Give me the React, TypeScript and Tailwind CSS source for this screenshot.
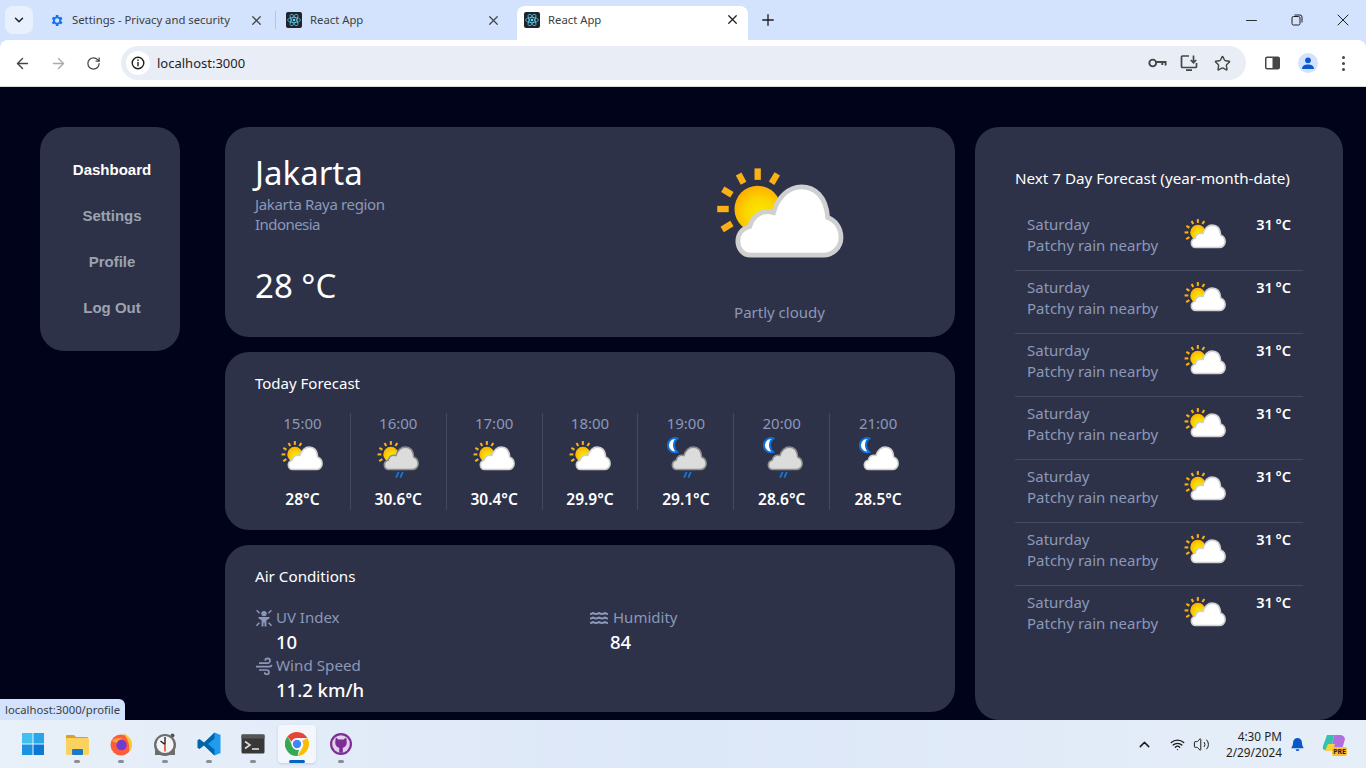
import { ArrowLeft, ArrowRight, ChevronDown, ChevronUp, Minus, Plus, RotateCw, Star, Volume2, Wifi, X } from "lucide-react";
import { FaWater } from "react-icons/fa";

// weather glyph, 64 units wide; main card draws it at 128px, lists at 42px
function WeatherIcon({ kind = "sun", rain = false, className = "" }: { kind?: "sun" | "moon"; rain?: boolean; className?: string }) {
  const rays = [
    [21, 1.7, 21, 7.5],
    [11.4, 4.5, 13.9, 9.2],
    [30.9, 4.5, 28, 9.2],
    [3.4, 12.2, 8, 15],
    [0.6, 22.2, 6.4, 22.2],
    [3.1, 32.5, 8, 29.5],
  ];
  return (
    <svg viewBox="0 0 64 60" className={`overflow-visible shrink-0 ${className}`}>
      <defs>
        <radialGradient id="sunfill" cx="0.55" cy="0.6" r="0.6">
          <stop offset="0" stopColor="#f6ea00" />
          <stop offset="0.55" stopColor="#fbd400" />
          <stop offset="1" stopColor="#ffae00" />
        </radialGradient>
      </defs>
      {kind === "sun" ? (
        <g>
          {rays.map((r, i) => (
            <line key={i} x1={r[0]} y1={r[1]} x2={r[2]} y2={r[3]} stroke="#fbb014" strokeWidth="3.2" />
          ))}
          <circle cx="21" cy="22.2" r="11.7" fill="url(#sunfill)" />
        </g>
      ) : (
        <path d="M18.5 -2.5A11 11 0 1 0 18.5 18.5 13.5 13.5 0 0 1 18.5 -2.5Z" fill="#fff" stroke="#1272dc" strokeWidth="3" />
      )}
      <path
        d="M17.5 45.5C13.5 45.5 11 42 11 38.5 11 34.5 13.5 31.8 17 31 18 27 21.5 23.5 26 23.5 27 23.5 28 23.7 29 24 31 16 37 11 43 11 50 11 55.5 16 56.3 26.5 60.5 28 63 32 63 36.5 63 41.5 59 45.5 54 45.5Z"
        fill={rain ? "#dcdcdc" : "#fff"}
        stroke={rain ? "#8f8f8f" : "#d0d0d0"}
        strokeWidth="2.4"
      />
      {rain && (
        <g stroke="#1b7ad8" strokeWidth="2.6">
          <line x1="29" y1="58" x2="33" y2="49" />
          <line x1="35.5" y1="58" x2="39.5" y2="49" />
        </g>
      )}
    </svg>
  );
}

function ReactFavicon() {
  return (
    <svg viewBox="0 0 16 16" className="w-4 h-4 shrink-0">
      <rect width="16" height="16" rx="2" fill="#20232a" />
      <g fill="none" stroke="#61dafb" strokeWidth="0.7">
        <ellipse cx="8" cy="8" rx="6.4" ry="2.6" />
        <ellipse cx="8" cy="8" rx="6.4" ry="2.6" transform="rotate(60 8 8)" />
        <ellipse cx="8" cy="8" rx="6.4" ry="2.6" transform="rotate(120 8 8)" />
      </g>
      <circle cx="8" cy="8" r="1.3" fill="#61dafb" />
    </svg>
  );
}

function GearFavicon() {
  return (
    <svg viewBox="0 0 24 24" className="w-[15px] h-[15px] shrink-0" fill="#1a73e8">
      <path d="M19.4 13a7.5 7.5 0 0 0 0-2l2.1-1.6-2-3.5-2.5 1a7.5 7.5 0 0 0-1.7-1L15 3.2h-4l-.4 2.7a7.5 7.5 0 0 0-1.7 1l-2.5-1-2 3.5L6.6 11a7.5 7.5 0 0 0 0 2l-2.2 1.6 2 3.5 2.5-1a7.5 7.5 0 0 0 1.7 1l.4 2.7h4l.4-2.7a7.5 7.5 0 0 0 1.7-1l2.5 1 2-3.5ZM13 15.5a3.5 3.5 0 1 1 0-7 3.5 3.5 0 0 1 0 7Z" />
    </svg>
  );
}

function TabBar() {
  return (
    <div className="h-10 flex items-start pl-[5px] text-[11.3px] text-[#3c4043] shrink-0">
      <div className="mt-[6px] w-[28px] h-7 rounded-lg bg-[#e8f0fe] flex items-center justify-center">
        <ChevronDown size={14} strokeWidth={2.5} className="text-[#1f1f1f]" />
      </div>
      <div className="mt-[6px] ml-[16px] w-[226px] h-7 flex items-center">
        <GearFavicon />
        <span className="ml-2 flex-1 truncate">Settings - Privacy and security</span>
        <X size={15} strokeWidth={2} className="mr-[11px] text-[#444746]" />
      </div>
      <div className="mt-[11px] w-px h-[18px] bg-[#a8c7fa]" />
      <div className="mt-[6px] ml-[10px] w-[231px] h-7 flex items-center">
        <ReactFavicon />
        <span className="ml-[8px] flex-1">React App</span>
        <X size={15} strokeWidth={2} className="mr-4 text-[#444746]" />
      </div>
      <div className="mt-[6px] w-[231px] h-[34px] bg-white rounded-t-lg flex items-start pt-[6px] pl-[7px]">
        <ReactFavicon />
        <span className="ml-[8px] flex-1">React App</span>
        <X size={15} strokeWidth={2} className="mr-2 text-[#1f1f1f]" />
      </div>
      <Plus size={18} strokeWidth={1.8} className="ml-[11px] mt-[11px] text-[#1f1f1f]" />
      <div className="flex-1" />
      <Minus size={17} strokeWidth={1.3} className="mt-[12px] text-[#1f1f1f]" />
      <svg viewBox="0 0 12 12" className="w-3 h-3 ml-[31px] mt-[14px]" fill="none" stroke="#1f1f1f">
        <rect x="1" y="2.5" width="8" height="8.5" rx="1.5" />
        <path d="M3.5 1h5.5a2 2 0 0 1 2 2v5.5" />
      </svg>
      <X size={20} strokeWidth={1.2} className="ml-[30px] mr-[13px] mt-[10px] text-[#1f1f1f]" />
    </div>
  );
}

function Toolbar() {
  return (
    <div className="h-[47px] bg-white flex items-center rounded-t-lg border-b border-[#d8d8d8] shrink-0 text-[#444746]">
      <ArrowLeft size={17} strokeWidth={2} className="ml-[14px]" />
      <ArrowRight size={17} strokeWidth={2} className="ml-[19px] text-[#a9acaf]" />
      <RotateCw size={15} strokeWidth={2} className="ml-[19px]" />
      <div className="ml-5 w-[1125px] h-[34px] rounded-full bg-[#e9edf6] flex items-center pl-[5px]">
        <div className="w-6 h-6 rounded-full bg-white flex items-center justify-center">
          <svg viewBox="0 0 14 14" className="w-[14px] h-[14px]" fill="none" stroke="#1f1f1f" strokeWidth="1.4">
            <circle cx="7" cy="7" r="5.8" />
            <path d="M7 6v4.2M7 3.4v1.5" />
          </svg>
        </div>
        <span className="ml-[7px] pt-px text-[13px] text-[#1f1f1f]">localhost:3000</span>
        <div className="flex-1" />
        <svg viewBox="0 0 20 12" className="w-[19px] h-3" fill="none" stroke="#444746" strokeWidth="2">
          <circle cx="5" cy="6" r="3.6" />
          <path d="M8.5 5h10v3.5M15 5v3" />
        </svg>
        <svg viewBox="0 0 18 18" className="w-[18px] h-[18px] ml-[13px]" fill="none" stroke="#444746" strokeWidth="1.7">
          <path d="M9 2H2.5a1 1 0 0 0-1 1v9.5a1 1 0 0 0 1 1h13a1 1 0 0 0 1-1V9" />
          <path d="M13.5 1.5v7M10.8 6l2.7 2.7L16.2 6M6 16.2h6" />
        </svg>
        <Star size={17} strokeWidth={2} className="ml-4 mr-[15px]" />
      </div>
      <svg viewBox="0 0 16 14" className="w-[15px] h-[14px] ml-[19px]">
        <rect x="0.8" y="0.8" width="14.4" height="12.4" rx="1.5" fill="none" stroke="#444746" strokeWidth="1.6" />
        <rect x="8" y="0.8" width="7" height="12.4" fill="#444746" />
      </svg>
      <div className="ml-[18px] w-5 h-5 rounded-full bg-[#d3e3fd] flex items-center justify-center">
        <svg viewBox="0 0 14 14" className="w-[14px] h-[14px]" fill="#0b57d0">
          <circle cx="7" cy="4.3" r="2.9" />
          <path d="M1 13c0-3 2.7-4.4 6-4.4s6 1.4 6 4.4Z" />
        </svg>
      </div>
      <div className="ml-6 flex flex-col gap-[3px]">
        <div className="w-[3px] h-[3px] rounded-full bg-[#444746]" />
        <div className="w-[3px] h-[3px] rounded-full bg-[#444746]" />
        <div className="w-[3px] h-[3px] rounded-full bg-[#444746]" />
      </div>
    </div>
  );
}

function Sidebar() {
  const items = ["Dashboard", "Settings", "Profile", "Log Out"];
  return (
    <nav className="w-[140px] h-[224px] shrink-0 rounded-3xl bg-[#2d3248] flex flex-col items-center pt-[31px] pl-1 gap-[23px] font-['Liberation_Sans',sans-serif] font-bold text-[15px]">
      {items.map((item, i) => (
        <a key={item} className={`leading-[23px] ${i === 0 ? "text-white" : "text-[#9ca3af]"}`}>
          {item}
        </a>
      ))}
    </nav>
  );
}

const hours = [
  { t: "15:00", v: "28°C", kind: "sun", rain: false },
  { t: "16:00", v: "30.6°C", kind: "sun", rain: true },
  { t: "17:00", v: "30.4°C", kind: "sun", rain: false },
  { t: "18:00", v: "29.9°C", kind: "sun", rain: false },
  { t: "19:00", v: "29.1°C", kind: "moon", rain: true },
  { t: "20:00", v: "28.6°C", kind: "moon", rain: true },
  { t: "21:00", v: "28.5°C", kind: "moon", rain: false },
] as const;

function UvIcon() {
  return (
    <svg viewBox="0 0 18 18" className="w-[18px] h-[18px]" fill="#8c98b8">
      <circle cx="9" cy="4.6" r="2.7" />
      <path d="M3.6 8h10.8v1.6l-3 1.6v6.3H9.5v-4H8.5v4H6.6v-6.3l-3-1.6Z" />
      <path d="M1.6 1.2 4.6 4.2M16.4 1.2l-3 3M1.4 16.8l3-3M16.6 16.8l-3-3" stroke="#8c98b8" strokeWidth="1.5" />
    </svg>
  );
}

function WindIcon() {
  return (
    <svg viewBox="0 0 18 18" className="w-[18px] h-[18px]" fill="none" stroke="#8c98b8" strokeWidth="1.7">
      <path d="M4 6.2h8.6a2.4 2.4 0 1 0-2.4-2.4" />
      <path d="M1 9.6h13.6a1.9 1.9 0 0 0 1.9-1.9" />
      <path d="M4 13h7.8a2.2 2.2 0 1 1-2.2 2.2" />
    </svg>
  );
}

function MainColumn() {
  return (
    <div className="w-[730px] shrink-0 flex flex-col gap-[15px]">
      <section className="h-[210px] rounded-3xl bg-[#2d3248] flex pl-[30px] pt-[22px]">
        <div className="flex-1">
          <h1 className="text-[33px] leading-[48px] text-white">Jakarta</h1>
          <p className="text-[#8c98b8] text-[15px] leading-[20px] -mt-[3px] tracking-[-0.35px]">Jakarta Raya region</p>
          <p className="text-[#8c98b8] text-[15px] leading-[20px] tracking-[-0.55px]">Indonesia</p>
          <p className="text-[33px] leading-[48px] text-white mt-[28px]">28 °C</p>
        </div>
        <div className="w-[128px] mr-[112px] mt-[16px] flex flex-col items-center">
          <WeatherIcon className="w-[127px] h-[119px] blur-[0.5px]" />
          <p className="mt-[18px] pl-px text-[#8c98b8] text-[15px] leading-[21px] whitespace-nowrap">Partly cloudy</p>
        </div>
      </section>

      <section className="h-[178px] rounded-3xl bg-[#2d3248] pl-[30px] pr-[29px] pt-[21px]">
        <h2 className="text-white text-[15px] leading-[21px]">Today Forecast</h2>
        <div className="grid grid-cols-7 mt-[19px]">
          {hours.map((h, i) => (
            <div key={h.t} className={`h-[97px] flex flex-col items-center ${i < 6 ? "border-r border-[#434964]" : ""}`}>
              <span className="text-[#8c98b8] text-[15px] leading-[21px]">{h.t}</span>
              <WeatherIcon kind={h.kind} rain={h.rain} className="w-[42px] h-[39px] mt-[6px]" />
              <span className="text-white font-semibold text-[15.5px] leading-[21px] mt-[10px]">{h.v}</span>
            </div>
          ))}
        </div>
      </section>

      <section className="h-[167px] rounded-3xl bg-[#2d3248] pl-[30px] pr-[30px] pt-[21px]">
        <h2 className="text-white text-[15.2px] leading-[21px]">Air Conditions</h2>
        <div className="grid grid-cols-2 mt-5">
          <div>
            <div className="flex items-center gap-[3px] text-[#8c98b8] text-[15px] leading-[21px]">
              <UvIcon />
              UV Index
            </div>
            <p className="pl-[21px] text-white text-[18.5px] font-medium leading-[27px]">10</p>
            <div className="flex items-center gap-[3px] text-[#8c98b8] text-[15.2px] leading-[21px]">
              <WindIcon />
              Wind Speed
            </div>
            <p className="pl-[21px] text-white text-[18.5px] font-medium leading-[27px]">11.2 km/h</p>
          </div>
          <div>
            <div className="flex items-center gap-[5px] text-[#8c98b8] text-[15px] leading-[21px]">
              <FaWater size={18} />
              Humidity
            </div>
            <p className="pl-[20px] text-white text-[18.5px] font-medium leading-[27px]">84</p>
          </div>
        </div>
      </section>
    </div>
  );
}

function WeekPanel() {
  const days = Array.from({ length: 7 }, (_, i) => i);
  return (
    <aside className="w-[368px] h-[593px] shrink-0 rounded-3xl bg-[#2d3248] pl-10 pr-10 pt-[41px]">
      <h2 className="text-white text-[15.2px] leading-[21px] whitespace-nowrap">Next 7 Day Forecast (year-month-date)</h2>
      <div className="mt-[19px]">
        {days.map((d) => (
          <div key={d} className={`h-[63px] flex pl-3 pr-3 pt-[6px] ${d < 6 ? "border-b border-[#434964]" : ""}`}>
            <div className="w-[157px] text-[#8c98b8] text-[15px] leading-[21px]">
              <p>Saturday</p>
              <p className="whitespace-nowrap">Patchy rain nearby</p>
            </div>
            <WeatherIcon className="w-[42px] h-[39px] mt-1" />
            <span className="ml-auto text-white font-semibold text-[14.5px] leading-[21px] [word-spacing:-1px]">31 °C</span>
          </div>
        ))}
      </div>
    </aside>
  );
}

function AppIcon({ children, active = false, dot = true }: { children: React.ReactNode; active?: boolean; dot?: boolean }) {
  return (
    <div className={`relative w-[38px] h-[38px] rounded flex items-center justify-center ${active ? "bg-[#f3f7fc] shadow-sm" : ""}`}>
      {children}
      {dot && (
        <div className={`absolute bottom-0 left-1/2 -translate-x-1/2 h-[3px] rounded-full ${active ? "w-4 bg-[#0067c0]" : "w-[6px] bg-[#8a8d91]"}`} />
      )}
    </div>
  );
}

function Taskbar() {
  return (
    <div className="h-12 shrink-0 bg-gradient-to-r from-[#e8f0f8] via-[#dce7f8] to-[#e6eff8] flex items-center pl-[14px] text-[#1b1b1b]">
      <div className="flex items-center gap-[6px]">
        <AppIcon dot={false}>
          <svg viewBox="0 0 24 24" className="w-6 h-6">
            <path d="M1 1h10.5v10.5H1Z" fill="#3fc0f0" />
            <path d="M12.5 1H23v10.5H12.5Z" fill="#2aa5e8" />
            <path d="M1 12.5h10.5V23H1Z" fill="#1b93e0" />
            <path d="M12.5 12.5H23V23H12.5Z" fill="#0a78d4" />
          </svg>
        </AppIcon>
        <AppIcon>
          <svg viewBox="0 0 24 24" className="w-6 h-6">
            <path d="M1 4a1 1 0 0 1 1-1h7l2 2h11a1 1 0 0 1 1 1v2H1Z" fill="#d9a12a" />
            <rect x="1" y="6" width="23" height="17" rx="1.5" fill="#fbd25e" />
            <rect x="7" y="17" width="11" height="6" rx="1" fill="#1c78c8" />
          </svg>
        </AppIcon>
        <AppIcon>
          <svg viewBox="0 0 24 24" className="w-6 h-6">
            <circle cx="12" cy="13" r="10.5" fill="#ff5c39" />
            <path d="M14 1c4 2 9 5 9 12 0 3-1 5-3 7 1-7-1-13-6-19Z" fill="#ffc62e" />
            <circle cx="12.5" cy="13" r="5.2" fill="#6e3bd6" />
            <path d="M3 9c3-3 8-4 11-2-3 0-5 1-6 4Z" fill="#ffa436" />
          </svg>
        </AppIcon>
        <AppIcon>
          <svg viewBox="0 0 24 24" className="w-6 h-6">
            <circle cx="19.5" cy="3.5" r="2" fill="#555" />
            <circle cx="12" cy="13" r="11" fill="#6d6d6d" />
            <rect x="2" y="18" width="20" height="5" fill="#6d6d6d" />
            <circle cx="12" cy="12.5" r="8.6" fill="#f4f4f4" />
            <path d="M12 12.5V5M12 12.5 7.5 9" stroke="#222" strokeWidth="1.4" />
            <path d="M12 12.5v7" stroke="#d8341f" strokeWidth="1.4" />
          </svg>
        </AppIcon>
        <AppIcon>
          <svg viewBox="0 0 24 24" className="w-6 h-6">
            <path d="M17.5 0.5 23.5 3v18l-6 2.5L7 13.5Z" fill="#1f9cf0" />
            <path d="M17.5 0.5 7 10.5 2.5 7 0.5 8.3v7.4L2.5 17 7 13.5l10.5 10V17.5L11 12l6.5-5.5Z" fill="#0065a9" />
          </svg>
        </AppIcon>
        <AppIcon>
          <svg viewBox="0 0 24 24" className="w-6 h-6">
            <rect x="0.5" y="2.5" width="23" height="19" rx="1.5" fill="#383838" />
            <rect x="0.5" y="2.5" width="23" height="4" fill="#555" />
            <path d="M4 9.5 9 13l-5 3.5" stroke="#ddd" strokeWidth="1.6" fill="none" />
            <path d="M11 17h7" stroke="#ddd" strokeWidth="1.6" />
          </svg>
        </AppIcon>
        <AppIcon active>
          <svg viewBox="0 0 24 24" className="w-6 h-6">
            <path d="M12 0a12 12 0 0 1 10.4 6H12a6 6 0 0 0-5.6 3.8L2.5 4.6A12 12 0 0 1 12 0Z" fill="#ea4335" />
            <path d="M22.4 6A12 12 0 0 1 12.5 24l5-8.6A6 6 0 0 0 17 9Z" fill="#fbbc05" />
            <path d="M12.5 24A12 12 0 0 1 2.5 4.6l5 8.8A6 6 0 0 0 14 17.8Z" fill="#34a853" />
            <circle cx="12" cy="12" r="5.5" fill="#fff" />
            <circle cx="12" cy="12" r="4.2" fill="#4285f4" />
          </svg>
        </AppIcon>
        <AppIcon>
          <svg viewBox="0 0 24 24" className="w-6 h-6">
            <circle cx="12" cy="12" r="11" fill="#7b2f96" />
            <circle cx="12" cy="12" r="8.8" fill="#e3d0ea" />
            <path d="M6.8 5.5 9.5 7.5h5l2.7-2 .6 5c0 3-1.8 4.8-4 5.3v5h-3.6v-5c-2.2-.5-4-2.3-4-5.3Z" fill="#7b2f96" />
          </svg>
        </AppIcon>
      </div>
      <div className="flex-1" />
      <ChevronUp size={17} strokeWidth={2} />
      <Wifi size={15} strokeWidth={2} className="ml-[17px]" />
      <Volume2 size={17} strokeWidth={1.4} className="ml-2" />
      <div className="ml-[7px] w-[65px] text-right text-[11.8px] leading-[16px] text-[#1f1f1f]">
        <p>4:30 PM</p>
        <p>2/29/2024</p>
      </div>
      <svg viewBox="0 0 16 16" className="w-[15px] h-[15px] ml-[8px]" fill="#0b57c9">
        <path d="M8 1a4.7 4.7 0 0 1 4.7 4.7c0 4 1.8 5.3 1.8 6.3h-13c0-1 1.8-2.3 1.8-6.3A4.7 4.7 0 0 1 8 1ZM6 13h4a2 2 0 0 1-4 0Z" />
      </svg>
      <div className="relative ml-[17px] mr-5 w-6 h-6">
        <svg viewBox="0 0 24 24" className="w-6 h-6">
          <path d="M5 3h7l-3 15H3Q0 18 1 14Z" fill="#35c1b0" />
          <path d="M12 3h6q4 0 5 4l-2 7q-1 4-5 4H9Z" fill="#b06ee0" />
          <path d="M6 12h7l-2 7H3Z" fill="#f5d040" />
        </svg>
        <span className="absolute -right-[1px] bottom-0 bg-[#fbc02d] rounded-[2px] px-[1px] text-[7px] leading-[9px] font-bold text-[#222]">PRE</span>
      </div>
    </div>
  );
}

export default function App() {
  return (
    <div className="relative w-[1366px] h-[768px] overflow-hidden flex flex-col font-['Noto_Sans',sans-serif] bg-[#00031a]">
      <div className="bg-[#d3e3fd] shrink-0">
        <TabBar />
        <Toolbar />
      </div>
      <main className="flex-1 min-h-0 flex pl-10 pt-10 overflow-hidden">
        <Sidebar />
        <div className="ml-[45px]">
          <MainColumn />
        </div>
        <div className="ml-5">
          <WeekPanel />
        </div>
      </main>
      <Taskbar />
      {/* link preview bubble */}
      <div className="absolute left-0 bottom-[48px] h-[21px] px-[5px] bg-[#d3e3fd] rounded-tr-md text-[11.3px] leading-[21px] text-[#3c4043]">
        localhost:3000/profile
      </div>
    </div>
  );
}
